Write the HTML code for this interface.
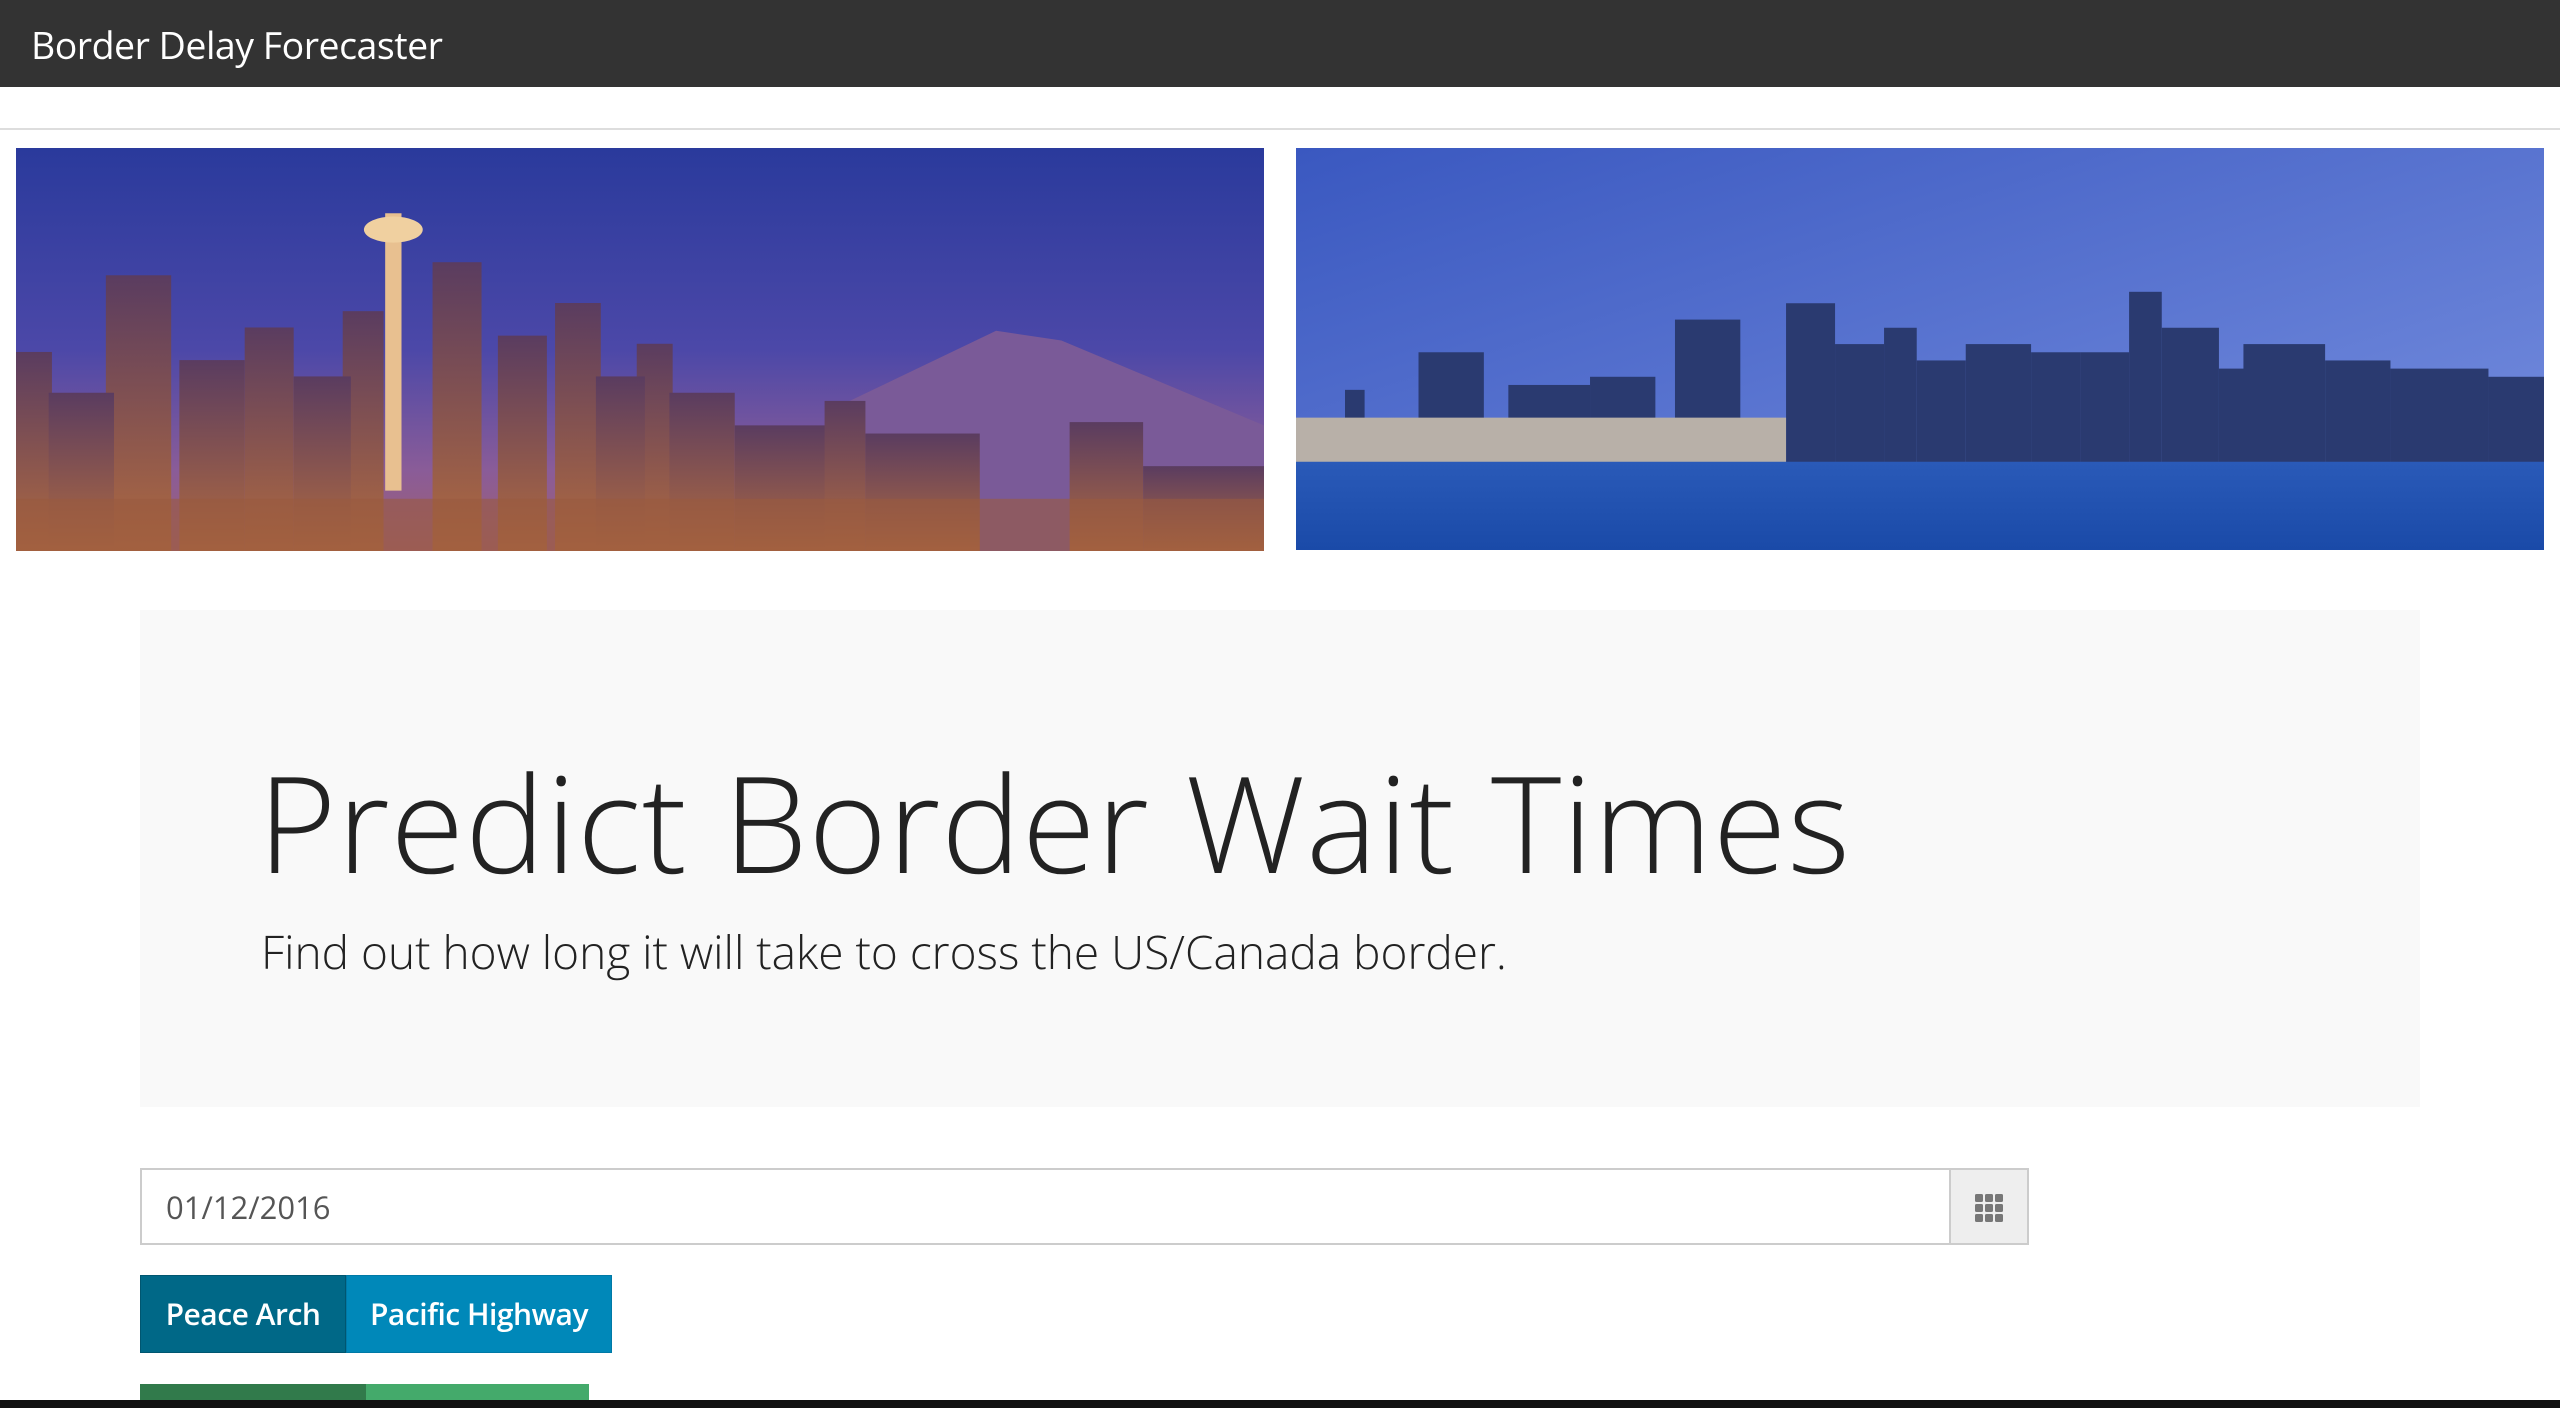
<!DOCTYPE html>
<html><head><meta charset="utf-8"><style>
*{margin:0;padding:0;box-sizing:border-box}
html,body{width:2560px;height:1408px;overflow:hidden}
body{background:#fff;font-family:"Open Sans","Liberation Sans",sans-serif;position:relative}
.nav{position:absolute;left:0;top:0;width:2560px;height:87px;background:#333}
.nav span{position:absolute;left:31px;top:19px;font-size:37.5px;color:#fff;letter-spacing:-0.5px}
.hr{position:absolute;left:0;top:128px;width:2560px;height:2px;background:#ddd}
.img{position:absolute;top:148px;height:403px;width:1248px}
.jumbo{position:absolute;left:140px;top:610px;width:2280px;height:497px;background:#f9f9f9}
.h1{position:absolute;left:258px;top:742px;font-size:134px;font-weight:300;color:#222;white-space:nowrap;letter-spacing:1px;line-height:1.2}
.sub{position:absolute;left:261px;top:921px;font-size:46px;font-weight:300;color:#222;white-space:nowrap}
.input{position:absolute;left:140px;top:1168px;width:1811px;height:77px;border:2px solid #ccc;background:#fff}
.input span{position:absolute;left:24px;top:17px;font-size:31px;color:#555}
.addon{position:absolute;left:1949px;top:1168px;width:80px;height:77px;border:2px solid #ccc;background:#eee}
.btn{position:absolute;top:1275px;height:78px;color:#fff;font-size:30px;font-weight:600;line-height:76px;text-align:center;letter-spacing:-0.5px}
.bot{position:absolute;left:0;top:1400px;width:2560px;height:8px;background:#111}
</style></head><body>
<div class="nav"><span>Border Delay Forecaster</span></div>
<div class="hr"></div>
<svg class="img" style="left:16px" viewBox="0 0 764 247" preserveAspectRatio="none">
<defs><linearGradient id="ls" x1="0" y1="0" x2="0" y2="1"><stop offset="0" stop-color="#2a3a9c"/><stop offset="0.5" stop-color="#4c48a8"/><stop offset="0.8" stop-color="#8a5c98"/><stop offset="1" stop-color="#a06070"/></linearGradient>
<linearGradient id="lc" x1="0" y1="0" x2="0" y2="1"><stop offset="0" stop-color="#5a3c60"/><stop offset="1" stop-color="#b06a40"/></linearGradient></defs>
<rect width="764" height="247" fill="url(#ls)"/>
<polygon points="500,160 600,112 640,118 764,170 764,247 500,247" fill="#7a5a98"/>
<g fill="url(#lc)">
<rect x="0" y="125" width="22" height="122"/><rect x="55" y="78" width="40" height="169"/><rect x="100" y="130" width="40" height="117"/>
<rect x="140" y="110" width="30" height="137"/><rect x="200" y="100" width="25" height="147"/><rect x="255" y="70" width="30" height="177"/>
<rect x="295" y="115" width="30" height="132"/><rect x="330" y="95" width="28" height="152"/><rect x="380" y="120" width="22" height="127"/>
<rect x="400" y="150" width="40" height="97"/><rect x="440" y="170" width="60" height="77"/><rect x="495" y="155" width="25" height="92"/>
<rect x="520" y="175" width="70" height="72"/><rect x="645" y="168" width="45" height="79"/><rect x="690" y="195" width="74" height="52"/>
<rect x="20" y="150" width="40" height="97"/><rect x="170" y="140" width="35" height="107"/><rect x="355" y="140" width="30" height="107"/>
</g>
<rect x="226" y="40" width="10" height="170" fill="#e8c090"/><ellipse cx="231" cy="50" rx="18" ry="8" fill="#f0d0a0"/>
<rect x="0" y="215" width="764" height="32" fill="#9a5a40" opacity="0.6"/>
</svg>
<svg class="img" style="left:1296px;height:402px" viewBox="0 0 764 246" preserveAspectRatio="none">
<defs><linearGradient id="rs" x1="0" y1="0" x2="1" y2="1"><stop offset="0" stop-color="#3a58c0"/><stop offset="1" stop-color="#7890e0"/></linearGradient>
<linearGradient id="rw" x1="0" y1="0" x2="0" y2="1"><stop offset="0" stop-color="#2a5ab8"/><stop offset="1" stop-color="#1a4aa8"/></linearGradient></defs>
<rect width="764" height="246" fill="url(#rs)"/>
<g fill="#2a3a70">
<rect x="30" y="148" width="12" height="45"/><rect x="75" y="125" width="40" height="68"/><rect x="130" y="145" width="50" height="48"/>
<rect x="180" y="140" width="40" height="53"/><rect x="232" y="105" width="40" height="88"/><rect x="300" y="95" width="30" height="98"/>
<rect x="330" y="120" width="30" height="73"/><rect x="360" y="110" width="20" height="83"/><rect x="380" y="130" width="30" height="63"/>
<rect x="410" y="120" width="40" height="73"/><rect x="450" y="125" width="30" height="68"/><rect x="480" y="125" width="30" height="68"/>
<rect x="510" y="88" width="20" height="105"/><rect x="530" y="110" width="35" height="83"/><rect x="565" y="135" width="20" height="58"/>
<rect x="580" y="120" width="50" height="73"/><rect x="630" y="130" width="40" height="63"/><rect x="670" y="135" width="60" height="58"/><rect x="730" y="140" width="34" height="53"/>
</g>
<rect x="0" y="165" width="300" height="28" fill="#b8b0a8"/>
<rect x="0" y="192" width="764" height="54" fill="url(#rw)"/>
</svg>
<div class="jumbo"></div>
<div class="h1">Predict Border Wait Times</div>
<div class="sub">Find out how long it will take to cross the US/Canada border.</div>
<div class="input"><span>01/12/2016</span></div>
<div class="addon"><svg style="position:absolute;left:24px;top:24px" width="28" height="28" viewBox="0 0 28 28" fill="#777">
<rect x="0" y="0" width="8" height="8" rx="1.5"/><rect x="10" y="0" width="8" height="8" rx="1.5"/><rect x="20" y="0" width="8" height="8" rx="1.5"/>
<rect x="0" y="10" width="8" height="8" rx="1.5"/><rect x="10" y="10" width="8" height="8" rx="1.5"/><rect x="20" y="10" width="8" height="8" rx="1.5"/>
<rect x="0" y="20" width="8" height="8" rx="1.5"/><rect x="10" y="20" width="8" height="8" rx="1.5"/><rect x="20" y="20" width="8" height="8" rx="1.5"/></svg></div>
<div class="btn" style="left:140px;width:206px;background:#006887;border:1px solid #005670">Peace Arch</div>
<div class="btn" style="left:346px;width:266px;background:#0088b9;border:1px solid #0079a6">Pacific Highway</div>
<div class="btn" style="left:140px;top:1384px;height:16px;width:226px;background:#317a4b"></div>
<div class="btn" style="left:366px;top:1384px;height:16px;width:223px;background:#44aa6b"></div>
<div class="bot"></div>
</body></html>
